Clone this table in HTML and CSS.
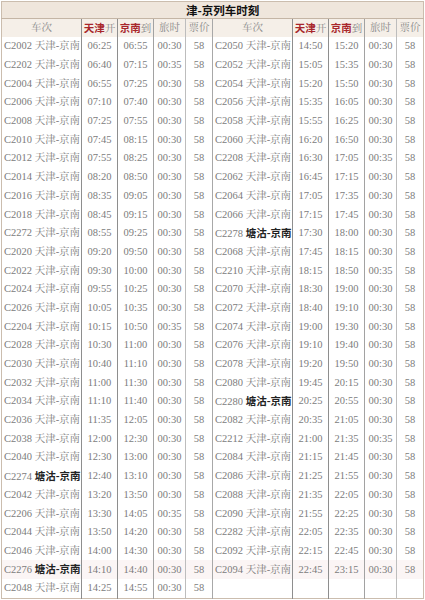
FILE: index.html
```html
<!DOCTYPE html>
<html lang="zh">
<head>
<meta charset="utf-8">
<title>津-京列车时刻</title>
<link rel="stylesheet" href="styles.css">
</head>
<body>
<table class="tt">
<colgroup>
<col class="w-tr"><col class="w-t"><col class="w-t"><col class="w-d"><col class="w-p">
<col class="w-tr"><col class="w-t"><col class="w-t"><col class="w-d"><col class="w-p">
</colgroup>
<tr class="title"><td colspan="10">津-京列车时刻</td></tr>
<tr class="head">
<td class="b1">车次</td><td class="b2"><b class="red">天津</b>开</td><td class="b3"><b class="red">京南</b>到</td><td class="b4">旅时</td><td class="b5">票价</td>
<td class="b1">车次</td><td class="b2"><b class="red">天津</b>开</td><td class="b3"><b class="red">京南</b>到</td><td class="b4">旅时</td><td>票价</td>
</tr>
<tr class="row"><td class="b1 trn">C2002 天津-京南</td><td class="b2">06:25</td><td class="b3">06:55</td><td class="b4">00:30</td><td class="b5">58</td><td class="b1 trn">C2050 天津-京南</td><td class="b2">14:50</td><td class="b3">15:20</td><td class="b4">00:30</td><td>58</td></tr>
<tr class="row"><td class="b1 trn">C2202 天津-京南</td><td class="b2">06:40</td><td class="b3">07:15</td><td class="b4">00:35</td><td class="b5">58</td><td class="b1 trn">C2052 天津-京南</td><td class="b2">15:05</td><td class="b3">15:35</td><td class="b4">00:30</td><td>58</td></tr>
<tr class="row"><td class="b1 trn">C2004 天津-京南</td><td class="b2">06:55</td><td class="b3">07:25</td><td class="b4">00:30</td><td class="b5">58</td><td class="b1 trn">C2054 天津-京南</td><td class="b2">15:20</td><td class="b3">15:50</td><td class="b4">00:30</td><td>58</td></tr>
<tr class="row"><td class="b1 trn">C2006 天津-京南</td><td class="b2">07:10</td><td class="b3">07:40</td><td class="b4">00:30</td><td class="b5">58</td><td class="b1 trn">C2056 天津-京南</td><td class="b2">15:35</td><td class="b3">16:05</td><td class="b4">00:30</td><td>58</td></tr>
<tr class="row"><td class="b1 trn">C2008 天津-京南</td><td class="b2">07:25</td><td class="b3">07:55</td><td class="b4">00:30</td><td class="b5">58</td><td class="b1 trn">C2058 天津-京南</td><td class="b2">15:55</td><td class="b3">16:25</td><td class="b4">00:30</td><td>58</td></tr>
<tr class="row"><td class="b1 trn">C2010 天津-京南</td><td class="b2">07:45</td><td class="b3">08:15</td><td class="b4">00:30</td><td class="b5">58</td><td class="b1 trn">C2060 天津-京南</td><td class="b2">16:20</td><td class="b3">16:50</td><td class="b4">00:30</td><td>58</td></tr>
<tr class="row"><td class="b1 trn">C2012 天津-京南</td><td class="b2">07:55</td><td class="b3">08:25</td><td class="b4">00:30</td><td class="b5">58</td><td class="b1 trn">C2208 天津-京南</td><td class="b2">16:30</td><td class="b3">17:05</td><td class="b4">00:35</td><td>58</td></tr>
<tr class="row"><td class="b1 trn">C2014 天津-京南</td><td class="b2">08:20</td><td class="b3">08:50</td><td class="b4">00:30</td><td class="b5">58</td><td class="b1 trn">C2062 天津-京南</td><td class="b2">16:45</td><td class="b3">17:15</td><td class="b4">00:30</td><td>58</td></tr>
<tr class="row"><td class="b1 trn">C2016 天津-京南</td><td class="b2">08:35</td><td class="b3">09:05</td><td class="b4">00:30</td><td class="b5">58</td><td class="b1 trn">C2064 天津-京南</td><td class="b2">17:05</td><td class="b3">17:35</td><td class="b4">00:30</td><td>58</td></tr>
<tr class="row"><td class="b1 trn">C2018 天津-京南</td><td class="b2">08:45</td><td class="b3">09:15</td><td class="b4">00:30</td><td class="b5">58</td><td class="b1 trn">C2066 天津-京南</td><td class="b2">17:15</td><td class="b3">17:45</td><td class="b4">00:30</td><td>58</td></tr>
<tr class="row"><td class="b1 trn">C2272 天津-京南</td><td class="b2">08:55</td><td class="b3">09:25</td><td class="b4">00:30</td><td class="b5">58</td><td class="b1 trn">C2278 <b class="tg">塘沽-京南</b></td><td class="b2">17:30</td><td class="b3">18:00</td><td class="b4">00:30</td><td>58</td></tr>
<tr class="row"><td class="b1 trn">C2020 天津-京南</td><td class="b2">09:20</td><td class="b3">09:50</td><td class="b4">00:30</td><td class="b5">58</td><td class="b1 trn">C2068 天津-京南</td><td class="b2">17:45</td><td class="b3">18:15</td><td class="b4">00:30</td><td>58</td></tr>
<tr class="row"><td class="b1 trn">C2022 天津-京南</td><td class="b2">09:30</td><td class="b3">10:00</td><td class="b4">00:30</td><td class="b5">58</td><td class="b1 trn">C2210 天津-京南</td><td class="b2">18:15</td><td class="b3">18:50</td><td class="b4">00:35</td><td>58</td></tr>
<tr class="row"><td class="b1 trn">C2024 天津-京南</td><td class="b2">09:55</td><td class="b3">10:25</td><td class="b4">00:30</td><td class="b5">58</td><td class="b1 trn">C2070 天津-京南</td><td class="b2">18:30</td><td class="b3">19:00</td><td class="b4">00:30</td><td>58</td></tr>
<tr class="row"><td class="b1 trn">C2026 天津-京南</td><td class="b2">10:05</td><td class="b3">10:35</td><td class="b4">00:30</td><td class="b5">58</td><td class="b1 trn">C2072 天津-京南</td><td class="b2">18:40</td><td class="b3">19:10</td><td class="b4">00:30</td><td>58</td></tr>
<tr class="row"><td class="b1 trn">C2204 天津-京南</td><td class="b2">10:15</td><td class="b3">10:50</td><td class="b4">00:35</td><td class="b5">58</td><td class="b1 trn">C2074 天津-京南</td><td class="b2">19:00</td><td class="b3">19:30</td><td class="b4">00:30</td><td>58</td></tr>
<tr class="row"><td class="b1 trn">C2028 天津-京南</td><td class="b2">10:30</td><td class="b3">11:00</td><td class="b4">00:30</td><td class="b5">58</td><td class="b1 trn">C2076 天津-京南</td><td class="b2">19:10</td><td class="b3">19:40</td><td class="b4">00:30</td><td>58</td></tr>
<tr class="row"><td class="b1 trn">C2030 天津-京南</td><td class="b2">10:40</td><td class="b3">11:10</td><td class="b4">00:30</td><td class="b5">58</td><td class="b1 trn">C2078 天津-京南</td><td class="b2">19:20</td><td class="b3">19:50</td><td class="b4">00:30</td><td>58</td></tr>
<tr class="row"><td class="b1 trn">C2032 天津-京南</td><td class="b2">11:00</td><td class="b3">11:30</td><td class="b4">00:30</td><td class="b5">58</td><td class="b1 trn">C2080 天津-京南</td><td class="b2">19:45</td><td class="b3">20:15</td><td class="b4">00:30</td><td>58</td></tr>
<tr class="row"><td class="b1 trn">C2034 天津-京南</td><td class="b2">11:10</td><td class="b3">11:40</td><td class="b4">00:30</td><td class="b5">58</td><td class="b1 trn">C2280 <b class="tg">塘沽-京南</b></td><td class="b2">20:25</td><td class="b3">20:55</td><td class="b4">00:30</td><td>58</td></tr>
<tr class="row"><td class="b1 trn">C2036 天津-京南</td><td class="b2">11:35</td><td class="b3">12:05</td><td class="b4">00:30</td><td class="b5">58</td><td class="b1 trn">C2082 天津-京南</td><td class="b2">20:35</td><td class="b3">21:05</td><td class="b4">00:30</td><td>58</td></tr>
<tr class="row"><td class="b1 trn">C2038 天津-京南</td><td class="b2">12:00</td><td class="b3">12:30</td><td class="b4">00:30</td><td class="b5">58</td><td class="b1 trn">C2212 天津-京南</td><td class="b2">21:00</td><td class="b3">21:35</td><td class="b4">00:35</td><td>58</td></tr>
<tr class="row"><td class="b1 trn">C2040 天津-京南</td><td class="b2">12:30</td><td class="b3">13:00</td><td class="b4">00:30</td><td class="b5">58</td><td class="b1 trn">C2084 天津-京南</td><td class="b2">21:15</td><td class="b3">21:45</td><td class="b4">00:30</td><td>58</td></tr>
<tr class="row"><td class="b1 trn">C2274 <b class="tg">塘沽-京南</b></td><td class="b2">12:40</td><td class="b3">13:10</td><td class="b4">00:30</td><td class="b5">58</td><td class="b1 trn">C2086 天津-京南</td><td class="b2">21:25</td><td class="b3">21:55</td><td class="b4">00:30</td><td>58</td></tr>
<tr class="row"><td class="b1 trn">C2042 天津-京南</td><td class="b2">13:20</td><td class="b3">13:50</td><td class="b4">00:30</td><td class="b5">58</td><td class="b1 trn">C2088 天津-京南</td><td class="b2">21:35</td><td class="b3">22:05</td><td class="b4">00:30</td><td>58</td></tr>
<tr class="row"><td class="b1 trn">C2206 天津-京南</td><td class="b2">13:30</td><td class="b3">14:05</td><td class="b4">00:35</td><td class="b5">58</td><td class="b1 trn">C2090 天津-京南</td><td class="b2">21:55</td><td class="b3">22:25</td><td class="b4">00:30</td><td>58</td></tr>
<tr class="row"><td class="b1 trn">C2044 天津-京南</td><td class="b2">13:50</td><td class="b3">14:20</td><td class="b4">00:30</td><td class="b5">58</td><td class="b1 trn">C2282 天津-京南</td><td class="b2">22:05</td><td class="b3">22:35</td><td class="b4">00:30</td><td>58</td></tr>
<tr class="row"><td class="b1 trn">C2046 天津-京南</td><td class="b2">14:00</td><td class="b3">14:30</td><td class="b4">00:30</td><td class="b5">58</td><td class="b1 trn">C2092 天津-京南</td><td class="b2">22:15</td><td class="b3">22:45</td><td class="b4">00:30</td><td>58</td></tr>
<tr class="row hl"><td class="b1 trn">C2276 <b class="tg">塘沽-京南</b></td><td class="b2">14:10</td><td class="b3">14:40</td><td class="b4">00:30</td><td class="b5">58</td><td class="b1 trn">C2094 天津-京南</td><td class="b2">22:45</td><td class="b3">23:15</td><td class="b4">00:30</td><td>58</td></tr>
<tr class="row"><td class="b1 trn">C2048 天津-京南</td><td class="b2">14:25</td><td class="b3">14:55</td><td class="b4">00:30</td><td class="b5">58</td><td class="b1 trn"></td><td class="b2"></td><td class="b3"></td><td class="b4"></td><td></td></tr>
</table>
</body>
</html>
```

FILE: styles.css
```css
html, body {
  margin: 0;
  padding: 0;
  background: #ffffff;
}

.tt {
  border-collapse: collapse;
  table-layout: fixed;
  width: 423px;
  margin: 1px 0 0 1px;
  border: 1px solid #cbbdae;
  font-family: "Liberation Serif", "Noto Serif CJK SC", "Noto Sans CJK SC", serif;
  font-size: 10.5px;
  color: #7c7c7c;
}

.w-tr { width: 80px; }
.w-t { width: 36px; }
.w-d { width: 32px; }
.w-p { width: 27px; }

.tt td {
  padding: 0;
  text-align: center;
  white-space: nowrap;
  overflow: hidden;
  line-height: 12px;
}

.title td {
  height: 16px;
  background: #efe6dc;
  border-bottom: 1px solid #c4b5a5;
  font-family: "Noto Sans CJK SC", sans-serif;
  font-weight: bold;
  font-size: 11.5px;
  color: #111111;
  padding-left: 20px;
}

.head td {
  height: 18px;
  background: #f5efe8;
  color: #8a8a8a;
}

.row td {
  height: 18.7px;
}

.row.hl td {
  background: #fbf5f5;
}

.trn {
  text-align: left !important;
  padding-left: 2px !important;
}

.red {
  font-family: "Noto Sans CJK SC", sans-serif;
  font-weight: bold;
  color: #a8262b;
}

.tg {
  font-family: "Noto Sans CJK SC", sans-serif;
  font-weight: bold;
  color: #222222;
}

.b1 { border-right: 1px solid #8e8e8e; }
.b2 { border-right: 1px solid #8e8e8e; }
.b3 { border-right: 1px solid #a2a2a2; }
.b4 { border-right: 1px solid #bdbdbd; }
.b5 { border-right: 1px solid #a8a8a8; }
```
